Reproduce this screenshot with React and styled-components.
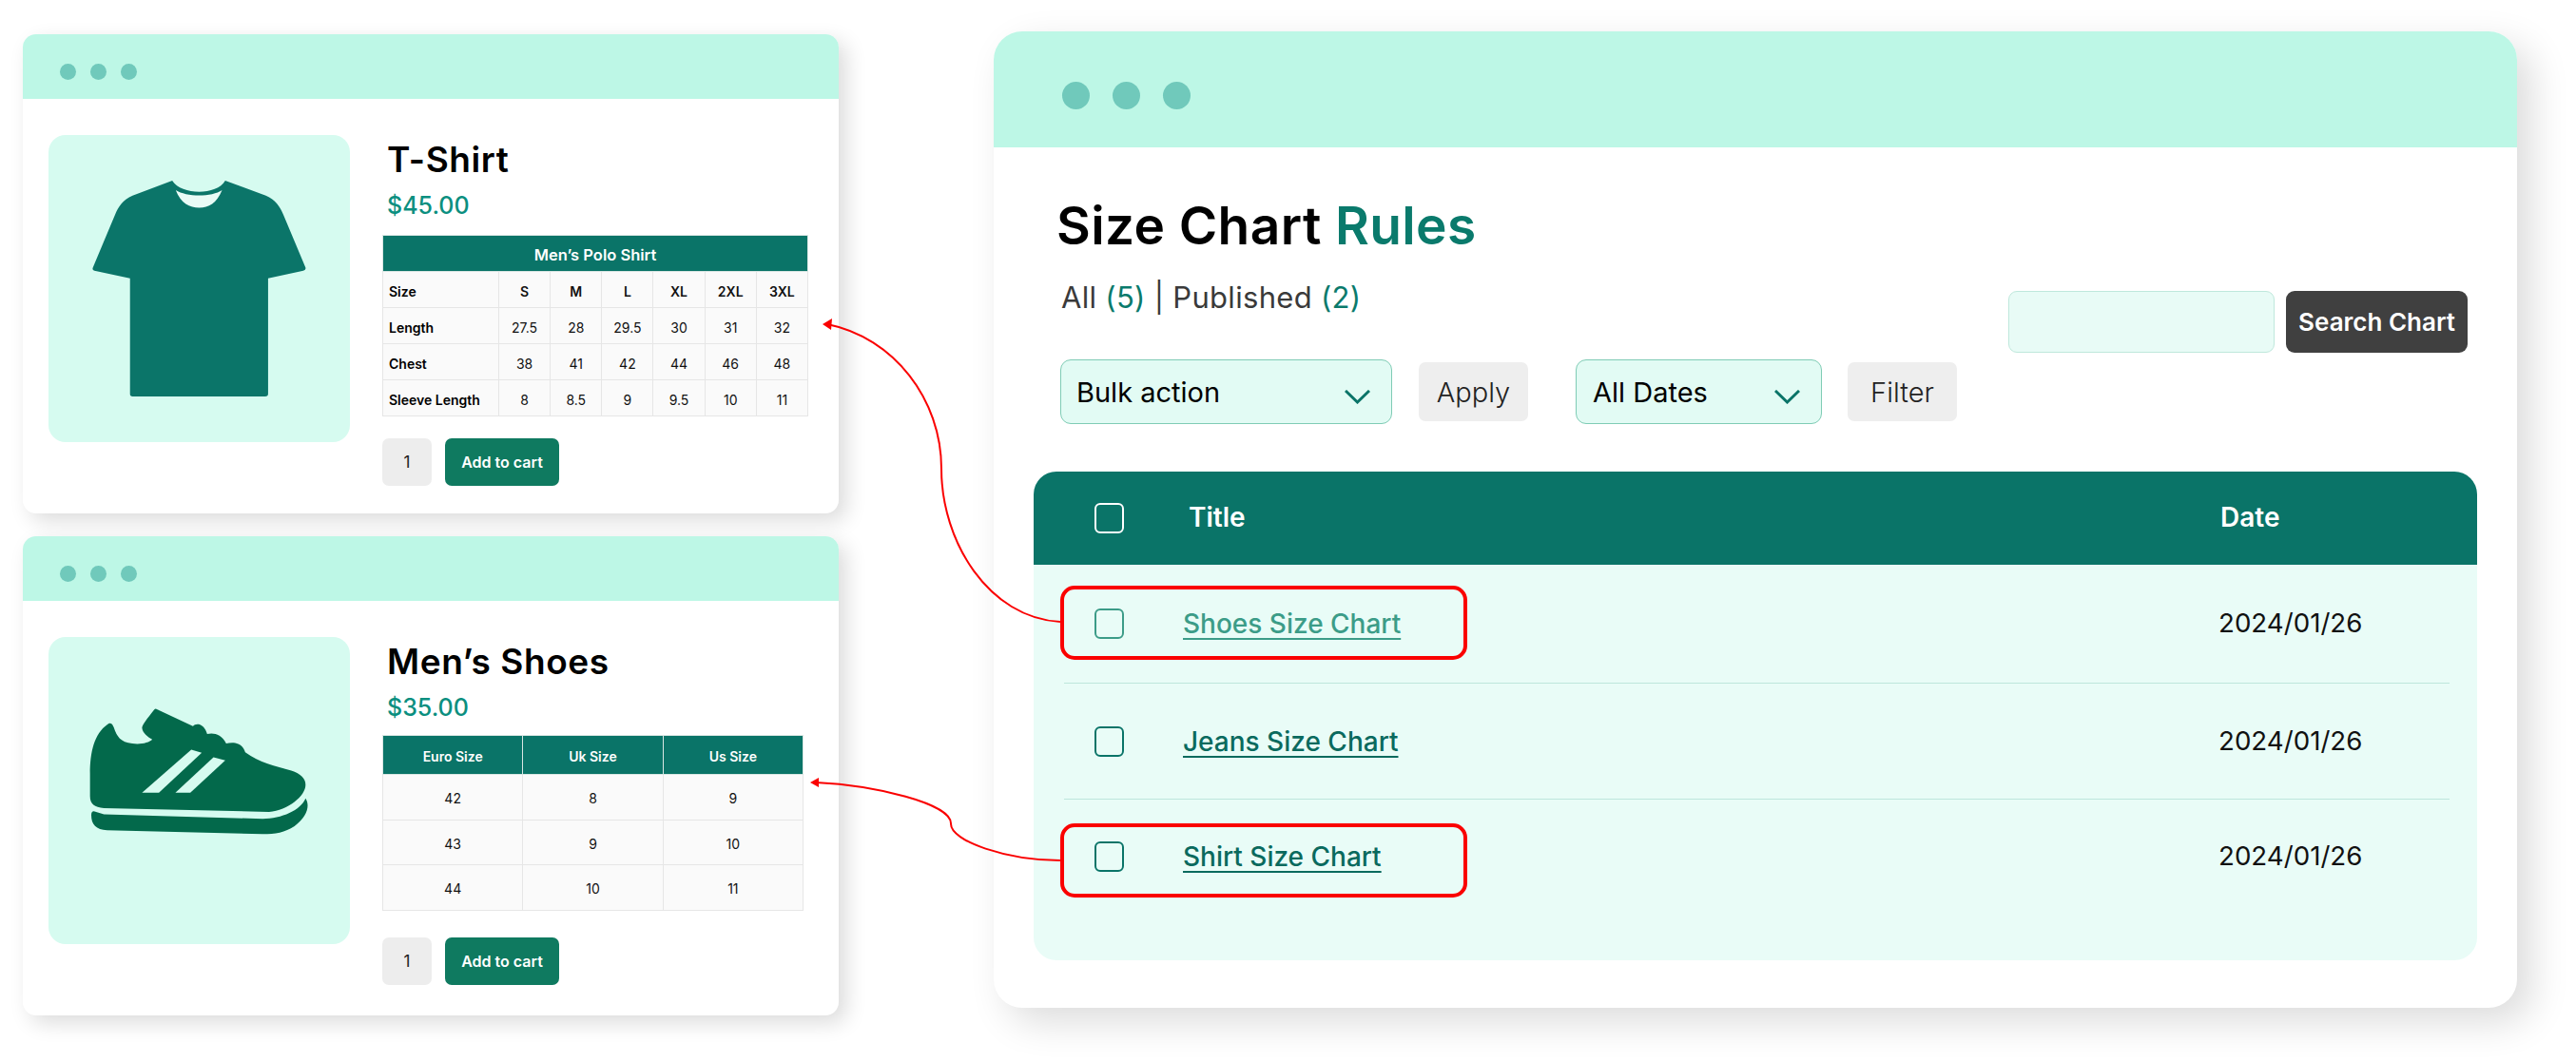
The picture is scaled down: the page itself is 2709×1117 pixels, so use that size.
import React from "react";
import styled, { createGlobalStyle } from "styled-components";

const Global = createGlobalStyle`
  html, body { margin: 0; padding: 0; background: #fff; }
  body { font-family: Inter, "Noto Sans", "Liberation Sans", sans-serif; }
  * { box-sizing: border-box; }
`;

const Page = styled.div`
  position: relative;
  display: flex;
  align-items: flex-start;
  width: 2709px;
  height: 1117px;
  padding: 33px 0 0 24px;
  overflow: hidden;
  background: #fff;
`;
const LeftColumn = styled.div`
  display: flex;
  flex-direction: column;
  gap: 24px;
  width: 858px;
  margin-top: 3px;
`;
const ProductCard = styled.section`
  height: 504px;
  background: #fff;
  border-radius: 14px;
  box-shadow: 8px 8px 22px rgba(0, 0, 0, 0.14);
  overflow: hidden;
`;
const WindowBar = styled.div`
  display: flex;
  align-items: center;
  gap: ${(p) => p.$gap}px;
  height: ${(p) => p.$h}px;
  padding: ${(p) => p.$drop}px 0 0 ${(p) => p.$pad}px;
  background: #bdf7e6;
`;
const Dot = styled.span`
  width: ${(p) => p.$size}px;
  height: ${(p) => p.$size}px;
  border-radius: 50%;
  background: #70c9bb;
`;
const ProductBody = styled.div`
  display: flex;
  gap: 34px;
  padding: 38px 0 0 27px;
`;
const ImageBox = styled.div`
  display: flex;
  align-items: center;
  justify-content: center;
  flex: none;
  width: 317px;
  height: 323px;
  padding-bottom: ${(p) => p.$lift || 0}px;
  border-radius: 18px;
  background: #d6fbf0;
`;
const Info = styled.div`
  display: flex;
  flex-direction: column;
  width: 448px;
`;
const ProductName = styled.h2`
  margin: 0;
  padding-left: 5px;
  font-size: 37px;
  line-height: 52px;
  font-weight: 600;
  letter-spacing: 0.6px;
  color: #000;
`;
const Price = styled.div`
  padding-left: 5px;
  font-size: 25px;
  line-height: 45px;
  font-weight: 500;
  color: #0b8f80;
`;
const SizeTable = styled.table`
  width: ${(p) => p.$w}px;
  margin-top: ${(p) => p.$top}px;
  border-collapse: collapse;
  table-layout: fixed;
  font-size: 14px;
  color: #111;
`;
const LabelCol = styled.col`
  width: 122px;
`;
const Head = styled.th`
  height: ${(p) => p.$h}px;
  padding: 3px 0 0;
  border: 1px solid #d9e6e3;
  background: #0a7468;
  color: #fff;
  font-size: ${(p) => p.$fs}px;
  font-weight: 600;
  text-align: center;
`;
const LabelCell = styled.td`
  height: 38px;
  padding: 3px 0 0 6px;
  border: 1px solid #e6e6e6;
  background: #fafafa;
  font-size: 14px;
  font-weight: 600;
  white-space: nowrap;
  color: #000;
`;
const Cell = styled.td`
  height: ${(p) => p.$h || 38}px;
  padding: 3px 0 0;
  border: 1px solid #e6e6e6;
  background: #fafafa;
  text-align: center;
  font-weight: ${(p) => (p.$bold ? 600 : 400)};
  font-size: 14px;
`;
const Actions = styled.div`
  display: flex;
  gap: 14px;
  height: 50px;
  margin-top: ${(p) => p.$top}px;
`;
const Qty = styled.div`
  display: flex;
  align-items: center;
  justify-content: center;
  width: 52px;
  border-radius: 7px;
  background: #ededed;
  font-size: 17px;
  color: #222;
`;
const CartButton = styled.button`
  width: 120px;
  padding: 0;
  border: 0;
  border-radius: 7px;
  background: #0f7a60;
  color: #fff;
  font: 600 16px Inter, sans-serif;
`;

const MainCard = styled.main`
  display: flex;
  flex-direction: column;
  flex: none;
  width: 1602px;
  height: 1027px;
  margin-left: 163px;
  border-radius: 30px;
  background: #fff;
  box-shadow: 15px 15px 40px rgba(0, 0, 0, 0.14);
  overflow: hidden;
`;
const MainBody = styled.div`
  padding: 47px 42px 0;
`;
const PageTitle = styled.h1`
  margin: 0;
  padding-left: 24px;
  font-size: 55px;
  line-height: 70px;
  font-weight: 600;
  letter-spacing: 0.4px;
  color: #000;
`;
const Accent = styled.span`
  color: #0a7a6c;
`;
const CountRow = styled.div`
  display: flex;
  justify-content: space-between;
  align-items: flex-start;
  padding: 0 10px 0 29px;
`;
const Counts = styled.div`
  margin-top: 21px;
  font-size: 31px;
  line-height: 40px;
  letter-spacing: 0.3px;
  color: #3a3a3a;
`;
const SearchGroup = styled.div`
  display: flex;
  gap: 12px;
  margin-top: 34px;
`;
const SearchInput = styled.div`
  width: 280px;
  height: 65px;
  border: 1px solid #bfe8dc;
  border-radius: 9px;
  background: #e8fbf6;
`;
const SearchButton = styled.button`
  width: 191px;
  height: 65px;
  padding: 0;
  border: 0;
  border-radius: 9px;
  background: #404040;
  color: #fff;
  font: 600 26px Inter, sans-serif;
`;
const FilterRow = styled.div`
  display: flex;
  align-items: center;
  height: 68px;
  margin-top: 7px;
  padding-left: 28px;
`;
const Select = styled.div`
  display: flex;
  align-items: center;
  justify-content: space-between;
  width: ${(p) => p.$w}px;
  height: 68px;
  padding: 0 22px 0 ${(p) => p.$pad}px;
  border: 1px solid #7fccb5;
  border-radius: 11px;
  background: #e2fbf4;
  font-size: 29px;
  color: #000;
`;
const Chevron = styled.svg`
  width: 27px;
  height: 15px;
  margin-top: 10px;
  fill: none;
  stroke: #0a7468;
  stroke-width: 3;
`;
const GreyButton = styled.button`
  width: 115px;
  height: 62px;
  margin-left: ${(p) => p.$left}px;
  margin-right: ${(p) => p.$right || 0}px;
  padding: 0;
  border: 0;
  border-radius: 7px;
  background: #eeeeee;
  color: #222;
  font: 350 29px Inter, sans-serif;
`;
const RulesTable = styled.div`
  height: 514px;
  margin-top: 50px;
  border-radius: 24px;
  background: #e9fcf7;
  overflow: hidden;
`;
const RulesHead = styled.div`
  display: flex;
  align-items: center;
  height: 98px;
  padding-left: 64px;
  background: #0a7468;
  color: #fff;
  font-size: 28px;
  font-weight: 600;
`;
const HeadTitle = styled.span`
  flex: 1;
  margin: -2px 0 0 68px;
`;
const HeadDate = styled.span`
  width: 270px;
  margin-top: -2px;
`;
const Check = styled.span`
  flex: none;
  width: 31px;
  height: 32px;
  border: 2.5px solid ${(p) => p.$color};
  border-radius: 6px;
`;
const RulesList = styled.div`
  padding: 0 29px 0 32px;
`;
const Row = styled.div`
  position: relative;
  display: flex;
  align-items: center;
  height: ${(p) => p.$h}px;
  padding-left: 32px;
  border-bottom: 1px solid ${(p) => (p.$last ? "transparent" : "#bde6dc")};
`;
const ChartLink = styled.a`
  flex: 1;
  margin-left: 62px;
  font-size: 28px;
  font-weight: 500;
  color: ${(p) => p.$color};
  text-decoration: underline;
  text-decoration-thickness: 2px;
  text-underline-offset: 5px;
`;
const RowDate = styled.span`
  width: 243px;
  margin-top: -2px;
  font-size: 27.7px;
  color: #111;
`;
const Highlight = styled.span`
  position: absolute;
  left: -4px;
  top: ${(p) => p.$top}px;
  width: 428px;
  height: 78px;
  border: 4px solid #fa0000;
  border-radius: 15px;
`;
const Arrows = styled.svg`
  position: absolute;
  top: 0;
  left: 0;
  width: 2709px;
  height: 1117px;
  pointer-events: none;
  fill: none;
  stroke: #fa0000;
  stroke-width: 2;
`;
const ArrowHead = styled.polygon`
  fill: #fa0000;
  stroke: none;
`;

const Shirt = () => (
  <svg width="227" height="229" viewBox="110 85 680 686" aria-hidden="true">
    <path
      fill="#0b7569"
      d="M365 88C395 135 505 135 532 88L660 135C690 148 705 170 715 195L785 362Q787 370 778 372L667 396L667 760Q667 768 658 768L240 768Q232 768 232 760L232 396L120 372Q112 370 115 362L185 195C195 170 210 148 240 135Z"
    />
    <path
      fill="#e9fbf6"
      d="M376 118C410 140 490 140 522 118C505 160 480 173 450 173C420 173 392 160 376 118Z"
    />
  </svg>
);

const Shoe = () => (
  <svg width="231" height="133" viewBox="74 74 692 398" aria-hidden="true">
    <path
      fill="#03694b"
      d="M285 76L400 130C410 120 435 120 445 155C465 150 490 155 505 185C525 180 555 180 565 212C610 245 660 255 710 270C740 280 755 295 755 315C755 350 700 395 640 400L120 388C90 386 76 375 76 350L76 280C76 210 90 150 135 122C145 118 150 130 155 145C165 170 180 185 225 186C245 186 265 180 272 172C260 165 240 150 240 135C240 125 265 95 278 78Q282 74 285 76Z"
    />
    <path fill="#d6fbf0" d="M395 204L428 214L293 340L240 340Z" />
    <path fill="#d6fbf0" d="M465 228L502 238L392 340L345 340Z" />
    <path
      fill="#03694b"
      d="M88 398L120 408L620 422C680 422 740 395 755 358C770 380 760 415 720 445C690 465 660 470 620 470L130 458C95 456 80 440 80 410Q80 398 88 398Z"
    />
  </svg>
);

const Bar = ({ h, size, gap, pad, drop }) => (
  <WindowBar $h={h} $gap={gap} $pad={pad} $drop={drop}>
    <Dot $size={size} />
    <Dot $size={size} />
    <Dot $size={size} />
  </WindowBar>
);

const shirtRows = [
  ["Length", "27.5", "28", "29.5", "30", "31", "32"],
  ["Chest", "38", "41", "42", "44", "46", "48"],
  ["Sleeve Length", "8", "8.5", "9", "9.5", "10", "11"],
];
const shoeRows = [
  ["42", "8", "9"],
  ["43", "9", "10"],
  ["44", "10", "11"],
];

const Chev = () => (
  <Chevron viewBox="0 0 27 15">
    <polyline points="1,1 13.5,13 26,1" />
  </Chevron>
);

export default function App() {
  return (
    <Page>
      <Global />
      <LeftColumn>
        <ProductCard>
          <Bar h={68} size={17} gap={15} pad={39} drop={10} />
          <ProductBody>
            <ImageBox>
              <Shirt />
            </ImageBox>
            <Info>
              <ProductName>T-Shirt</ProductName>
              <Price>$45.00</Price>
              <SizeTable $w={448} $top={8}>
                <colgroup>
                  <LabelCol />
                </colgroup>
                <thead>
                  <tr>
                    <Head $h={38} $fs={16.5} colSpan={7}>
                      Men’s Polo Shirt
                    </Head>
                  </tr>
                </thead>
                <tbody>
                  <tr>
                    <LabelCell>Size</LabelCell>
                    {["S", "M", "L", "XL", "2XL", "3XL"].map((s) => (
                      <Cell key={s} $bold>
                        {s}
                      </Cell>
                    ))}
                  </tr>
                  {shirtRows.map(([label, ...vals]) => (
                    <tr key={label}>
                      <LabelCell>{label}</LabelCell>
                      {vals.map((v, i) => (
                        <Cell key={i}>{v}</Cell>
                      ))}
                    </tr>
                  ))}
                </tbody>
              </SizeTable>
              <Actions $top={23}>
                <Qty>1</Qty>
                <CartButton>Add to cart</CartButton>
              </Actions>
            </Info>
          </ProductBody>
        </ProductCard>
        <ProductCard>
          <Bar h={68} size={17} gap={15} pad={39} drop={10} />
          <ProductBody>
            <ImageBox $lift={40}>
              <Shoe />
            </ImageBox>
            <Info>
              <ProductName>Men’s Shoes</ProductName>
              <Price>$35.00</Price>
              <SizeTable $w={443} $top={6}>
                <thead>
                  <tr>
                    <Head $h={41} $fs={14}>Euro Size</Head>
                    <Head $h={41} $fs={14}>Uk Size</Head>
                    <Head $h={41} $fs={14}>Us Size</Head>
                  </tr>
                </thead>
                <tbody>
                  {shoeRows.map((r) => (
                    <tr key={r[0]}>
                      {r.map((v, i) => (
                        <Cell key={i} $h={47.5}>
                          {v}
                        </Cell>
                      ))}
                    </tr>
                  ))}
                </tbody>
              </SizeTable>
              <Actions $top={28}>
                <Qty>1</Qty>
                <CartButton>Add to cart</CartButton>
              </Actions>
            </Info>
          </ProductBody>
        </ProductCard>
      </LeftColumn>

      <MainCard>
        <Bar h={122} size={29} gap={24} pad={72} drop={12} />
        <MainBody>
          <PageTitle>
            Size Chart <Accent>Rules</Accent>
          </PageTitle>
          <CountRow>
            <Counts>
              All <Accent>(5)</Accent> | Published <Accent>(2)</Accent>
            </Counts>
            <SearchGroup>
              <SearchInput />
              <SearchButton>Search Chart</SearchButton>
            </SearchGroup>
          </CountRow>
          <FilterRow>
            <Select $w={349} $pad={16}>
              Bulk action
              <Chev />
            </Select>
            <GreyButton $left={28} $right={50}>Apply</GreyButton>
            <Select $w={259} $pad={17}>
              All Dates
              <Chev />
            </Select>
            <GreyButton $left={27}>Filter</GreyButton>
          </FilterRow>
          <RulesTable>
            <RulesHead>
              <Check $color="#ffffff" />
              <HeadTitle>Title</HeadTitle>
              <HeadDate>Date</HeadDate>
            </RulesHead>
            <RulesList>
              <Row $h={125}>
                <Highlight $top={22} />
                <Check $color="#3c9c88" />
                <ChartLink $color="#3c9c88">Shoes Size Chart</ChartLink>
                <RowDate>2024/01/26</RowDate>
              </Row>
              <Row $h={122}>
                <Check $color="#0a7468" />
                <ChartLink $color="#0a6a5e">Jeans Size Chart</ChartLink>
                <RowDate>2024/01/26</RowDate>
              </Row>
              <Row $h={121} $last>
                <Highlight $top={25} />
                <Check $color="#0a7468" />
                <ChartLink $color="#0a6a5e">Shirt Size Chart</ChartLink>
                <RowDate>2024/01/26</RowDate>
              </Row>
            </RulesList>
          </RulesTable>
        </MainBody>
      </MainCard>

      <Arrows viewBox="0 0 2709 1117" aria-hidden="true">
        <path d="M1115 654C1040 650 990 570 990 493C990 420 940 355 870 341" />
        <ArrowHead points="865,341 875,335 874,347" />
        <path d="M1115 905C1060 905 999 885 1000 866C1000 845 920 826 858 823" />
        <ArrowHead points="852,823 861,818 861,828" />
      </Arrows>
    </Page>
  );
}
